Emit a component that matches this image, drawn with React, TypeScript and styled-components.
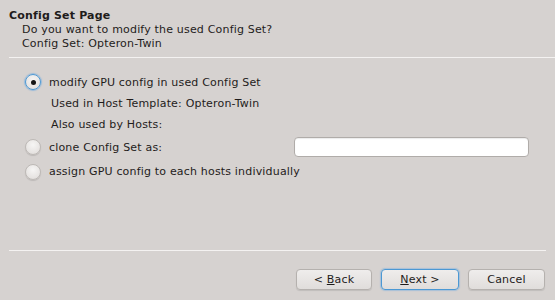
import React from 'react';
import styled, { createGlobalStyle, css } from 'styled-components';

const GlobalStyle = createGlobalStyle`
  html, body {
    margin: 0;
    padding: 0;
    background: #d6d2d0;
  }
  body {
    font-family: "DejaVu Sans", "Liberation Sans", sans-serif;
    font-size: 11px;
    letter-spacing: 0.18px;
    color: #1f1c1b;
  }
`;

const Page = styled.div`
  width: 555px;
  height: 300px;
  display: flex;
  flex-direction: column;
  background: #d6d2d0;
  overflow: hidden;
`;

const Header = styled.div`
  padding: 9px 0 7px 9px;
  display: flex;
  flex-direction: column;
`;

const Title = styled.div`
  font-weight: bold;
  line-height: 13px;
  height: 13px;
`;

const Subtitle = styled.div`
  padding-left: 13px;
  line-height: 13px;
  margin-top: 1px;
`;

const Separator = styled.div<{ $inset?: number }>`
  height: 1px;
  background: #f4f2f1;
  margin-left: 9px;
  margin-right: ${(p) => p.$inset ?? 0}px;
`;

const Body = styled.div`
  flex: 1;
  display: flex;
  flex-direction: column;
  padding: 13px 26px 0 25px;
`;

const Row = styled.div<{ $h: number; $indent?: number }>`
  height: ${(p) => p.$h}px;
  display: flex;
  align-items: center;
  padding-left: ${(p) => p.$indent ?? 0}px;
`;

const Radio = styled.span<{ $checked?: boolean }>`
  box-sizing: border-box;
  width: 16px;
  height: 16px;
  border-radius: 50%;
  margin-right: 8px;
  flex-shrink: 0;
  display: flex;
  align-items: center;
  justify-content: center;
  background: radial-gradient(circle at 50% 35%, #f6f5f4 0%, #e6e3e1 70%, #dcd9d7 100%);
  border: 1px solid #bdb9b6;
  box-shadow: 0 1px 1px rgba(0, 0, 0, 0.12);
  ${(p) =>
    p.$checked &&
    css`
      border: 1.5px solid #4d9ad6;
      box-shadow: 0 0 1px 1px rgba(110, 170, 225, 0.6);
      &::after {
        content: '';
        width: 5px;
        height: 5px;
        border-radius: 50%;
        background: #151515;
      }
    `}
`;

const Label = styled.span`
  white-space: nowrap;
`;

const TextInput = styled.input`
  box-sizing: border-box;
  margin-left: auto;
  width: 235px;
  height: 20px;
  border: 1px solid #b0aca9;
  border-radius: 4px;
  background: #ffffff;
  box-shadow: inset 0 1px 1px rgba(0, 0, 0, 0.08);
  outline: none;
  font: inherit;
  padding: 0 4px;
`;

const Footer = styled.div`
  display: flex;
  flex-direction: column;
`;

const Buttons = styled.div`
  display: flex;
  justify-content: flex-end;
  gap: 9px;
  padding: 18px 10px 10px 0;
`;

const Button = styled.button<{ $w: number; $focus?: boolean }>`
  box-sizing: border-box;
  width: ${(p) => p.$w}px;
  height: 21px;
  font: inherit;
  letter-spacing: inherit;
  color: #1f1c1b;
  border-radius: 4px;
  border: 1px solid ${(p) => (p.$focus ? '#4b98d4' : '#b5b1ae')};
  background: linear-gradient(#efedec, #e0dddb);
  box-shadow: ${(p) =>
    p.$focus ? '0 0 1px 1px rgba(110, 170, 225, 0.45)' : '0 1px 1px rgba(0, 0, 0, 0.1)'};
  padding: 0;
  display: flex;
  align-items: center;
  justify-content: center;
  u {
    text-decoration: underline;
  }
`;

export default function App() {
  return (
    <>
      <GlobalStyle />
      <Page>
        <Header>
          <Title>Config Set Page</Title>
          <Subtitle>Do you want to modify the used Config Set?</Subtitle>
          <Subtitle>Config Set: Opteron-Twin</Subtitle>
        </Header>
        <Separator />
        <Body>
          <Row $h={22}>
            <Radio $checked />
            <Label>modify GPU config in used Config Set</Label>
          </Row>
          <Row $h={21} $indent={26}>
            <Label>Used in Host Template: Opteron-Twin</Label>
          </Row>
          <Row $h={20} $indent={26}>
            <Label>Also used by Hosts:</Label>
          </Row>
          <Row $h={26}>
            <Radio />
            <Label>clone Config Set as:</Label>
            <TextInput />
          </Row>
          <Row $h={23}>
            <Radio />
            <Label>assign GPU config to each hosts individually</Label>
          </Row>
        </Body>
        <Footer>
          <Separator $inset={9} />
          <Buttons>
            <Button $w={76}>
              &lt;&nbsp;<u>B</u>ack
            </Button>
            <Button $w={78} $focus>
              <u>N</u>ext&nbsp;&gt;
            </Button>
            <Button $w={77}>Cancel</Button>
          </Buttons>
        </Footer>
      </Page>
    </>
  );
}
